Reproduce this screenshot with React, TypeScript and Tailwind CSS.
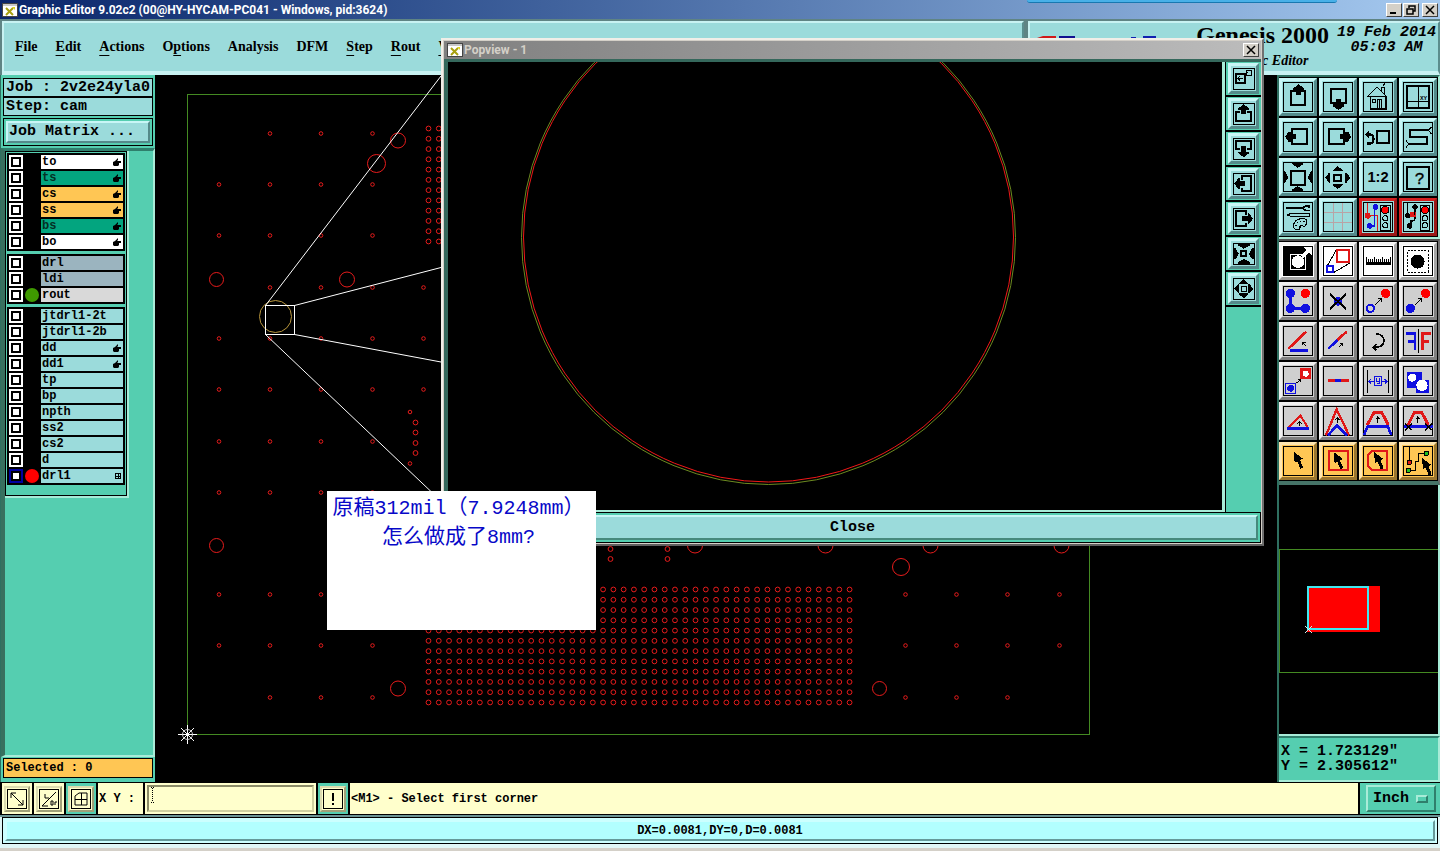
import React from "react";

const K = "#000";
const R = "#e01818";
const B = "#1010e0";

const bevelAqua = "border-t-[#c8f6f6] border-l-[#c8f6f6] border-b-[#548a8a] border-r-[#548a8a] bg-[#9bdbdb]";
const bevelWhite = "border-t-[#f4f4f4] border-l-[#f4f4f4] border-b-[#a4a4a4] border-r-[#a4a4a4] bg-white";
const bevelGray = "border-t-[#f0f0f0] border-l-[#f0f0f0] border-b-[#808080] border-r-[#808080] bg-[#cfcfcf]";
const bevelOrange = "border-t-[#ffe6b0] border-l-[#ffe6b0] border-b-[#9a7630] border-r-[#9a7630] bg-[#ffc654]";
const bevelRed = "border-t-[#d42020] border-l-[#d42020] border-b-[#9c1818] border-r-[#9c1818] bg-[#9bdbdb]";

type Tool = { name: string; tone: string; art: React.ReactNode };

const Cursor = ({ x, y }: { x: number; y: number }) => (
  <path transform={`translate(${x} ${y})`} d="M0 0L3 34L11 29L20 52L29 48L19 26L28 21Z" fill={K} stroke="none" />
);

const viewTools: Tool[] = [
  { name: "Pan up", tone: bevelAqua, art: <><rect x="28" y="31" width="42" height="42" strokeWidth="6" /><path fill={K} stroke="none" d="M50 10L66 22V28H58V43H42V28H34V22Z" /></> },
  { name: "Pan down", tone: bevelAqua, art: <><rect x="27" y="24" width="44" height="43" strokeWidth="6" /><path fill={K} stroke="none" d="M49 87L65 77V70H57V55H41V70H34V77Z" /></> },
  { name: "Home", tone: bevelAqua, art: <><path d="M16 47L45 18L74 47Z" /><path strokeWidth="5" d="M25 47V83H71V47" /><path d="M58 30V18H66V38M62 14L69 8M31 56h8v9h-8zM47 83V56H59V83M53 56V83" /></> },
  { name: "Window XY", tone: bevelAqua, art: <><rect x="14" y="16" width="68" height="66" strokeWidth="6" /><path d="M49 16V82M14 61H82" strokeWidth="4" /><text x="54" y="58" fontSize="18" fontWeight="bold" fill={K} stroke="none" fontFamily="Liberation Mono">XY</text></> },
  { name: "Pan left", tone: bevelAqua, art: <><rect x="31" y="25" width="44" height="44" strokeWidth="6" /><path fill={K} stroke="none" d="M10 47L20 32H27V39H42V55H27V63H20Z" /></> },
  { name: "Pan right", tone: bevelAqua, art: <><rect x="21" y="25" width="44" height="44" strokeWidth="6" /><path fill={K} stroke="none" d="M87 47L78 32H70V39H54V55H70V63H78Z" /></> },
  { name: "Previous view", tone: bevelAqua, art: <><rect x="45" y="30" width="36" height="37" strokeWidth="6" /><path strokeWidth="7" d="M16 67H26Q34 66 34 56V52Q34 42 24 40H18" /><path fill={K} stroke="none" d="M9 40L22 28V52Z" /></> },
  { name: "Serpentine", tone: bevelAqua, art: <><path strokeWidth="6" d="M78 28H24V48H76V69H21" /><path d="M88 18L79 28L88 38M12 59L21 69L12 79" /></> },
  { name: "Zoom in", tone: bevelAqua, art: <><rect x="27" y="29" width="42" height="42" strokeWidth="6" /><path fill={K} stroke="none" d="M31 6H63V10L47 20L31 10ZM47 75L63 85V90H31V85ZM4 31H9L19 49L9 66H4ZM92 31H87L77 49L87 66H92Z" /></> },
  { name: "Zoom out", tone: bevelAqua, art: <><rect x="37" y="41" width="20" height="20" strokeWidth="6" /><path fill={K} stroke="none" d="M47 15L62 28V31H32V28ZM32 69H62V73L47 84L32 73ZM10 50L21 35H25V66H21ZM85 50L73 35H69V66H73Z" /></> },
  { name: "Scale 1:2", tone: bevelAqua, art: <text x="48" y="64" textAnchor="middle" fontSize="44" fontWeight="bold" fill={K} stroke="none" fontFamily="Liberation Sans">1:2</text> },
  { name: "Query", tone: bevelAqua, art: <><rect x="15" y="17" width="66" height="66" strokeWidth="6" /><text x="53" y="69" textAnchor="middle" fontSize="50" fill={K} stroke={K} strokeWidth="1" fontFamily="Liberation Mono">?</text></> },
  { name: "Setup", tone: bevelAqua, art: <><path strokeWidth="6" d="M12 21H60" /><path strokeWidth="5" d="M84 15H70L61 21L70 28H84M80 22V13" /><path d="M14 42L28 37H83V46H28Z" /><path d="M74 56Q62 50 46 56Q34 64 34 76Q36 86 48 86Q56 84 54 76Q60 70 66 78Q76 70 74 56ZM44 64h4M54 60h4M64 62h4M40 74h4" /></> },
  { name: "Grid", tone: bevelAqua, art: <path stroke="#b9a3a5" d="M33 6V90M61 6V90M6 35H90M6 63H90" /> },
  { name: "Net compare", tone: bevelRed, art: <><path stroke={R} d="M17 6V44H47V90" /><path stroke={B} strokeWidth="4" d="M41 18H37V75H23" /><g stroke="none"><circle cx="41" cy="18" r="8" fill={B} /><circle cx="23" cy="75" r="8" fill={B} /><circle cx="17" cy="44" r="9" fill={R} /></g><rect x="56" y="12" width="29" height="75" /><circle cx="70" cy="27" r="11" fill="red" /><circle cx="70" cy="52" r="8" /><circle cx="70" cy="73" r="8" /></> },
  { name: "Net check", tone: bevelRed, art: <><path strokeWidth="4" d="M16 6V44M39 18V54Q38 60 27 60V75" /><g stroke="none" fill={K}><circle cx="39" cy="18" r="8" /><circle cx="23" cy="75" r="8" /><circle cx="17" cy="44" r="8" /></g><path stroke={R} strokeWidth="4" d="M25 45H42M27 32V45M33 32V45M40 32V45" /><rect x="54" y="12" width="29" height="75" /><circle cx="69" cy="27" r="11" fill="red" /><circle cx="69" cy="52" r="8" /><circle cx="69" cy="73" r="8" /></> },
];

const editTools: Tool[] = [
  { name: "Select feature", tone: bevelWhite, art: <><rect x="4" y="4" width="88" height="88" fill={K} stroke="none" /><circle cx="48" cy="50" r="19" fill="#fff" stroke="none" /><rect x="26" y="28" width="45" height="45" stroke="#fff" /><path stroke="#fff" strokeWidth="10" d="M60 36L80 17" /><path fill="#fff" stroke="none" d="M64 6H90V32Z" /></> },
  { name: "Transform", tone: bevelWhite, art: <><path d="M16 62L43 15M36 82L84 54" /><rect x="46" y="16" width="35" height="34" stroke={R} strokeWidth="6" /><rect x="16" y="64" width="17" height="17" stroke={B} strokeWidth="6" /></> },
  { name: "Measure", tone: bevelWhite, art: <><path strokeWidth="8" d="M12 55H88" /><path strokeWidth="3" d="M14 36V56M20 42V56M26 42V56M32 42V56M38 36V56M44 42V56M50 42V56M56 42V56M62 36V56M68 42V56M74 42V56M80 42V56M86 36V56" /></> },
  { name: "Pad highlight", tone: bevelWhite, art: <><rect x="17" y="17" width="61" height="64" strokeDasharray="6 4" /><circle cx="47" cy="50" r="21" fill={K} stroke="none" /></> },
  { name: "Copy", tone: bevelGray, art: <><path stroke={B} strokeWidth="9" d="M25 25V70H70" /><g stroke="none" fill={B}><circle cx="25" cy="25" r="14" /><circle cx="25" cy="70" r="14" /><circle cx="70" cy="70" r="14" /></g><circle cx="70" cy="25" r="14" fill="red" stroke="none" /></> },
  { name: "Delete", tone: bevelGray, art: <><circle cx="48" cy="49" r="13" fill={B} stroke="none" /><path strokeWidth="6" d="M24 27L72 72M72 27L24 72" /></> },
  { name: "Move copy", tone: bevelGray, art: <><circle cx="25" cy="70" r="11" stroke={B} strokeWidth="6" /><circle cx="71" cy="25" r="14" fill="red" stroke="none" /><path d="M39 60L58 42M49 41H59V51" /></> },
  { name: "Move", tone: bevelGray, art: <><circle cx="25" cy="70" r="14" fill={B} stroke="none" /><circle cx="71" cy="25" r="14" fill="red" stroke="none" /><path d="M39 60L58 42M49 41H59V51" /></> },
  { name: "Angle", tone: bevelGray, art: <><path stroke={R} strokeWidth="8" d="M19 71L73 20" /><path stroke={B} strokeWidth="8" d="M24 77H79" /><path d="M73 64L61 52M61 61V51H71" /></> },
  { name: "Extend line", tone: bevelGray, art: <><path stroke={R} strokeWidth="8" d="M46 45L74 20" /><path stroke={B} strokeWidth="8" d="M19 71L47 44" /><path d="M51 66L62 54M53 54H62V63" /></> },
  { name: "Rotate", tone: bevelGray, art: <><path strokeWidth="5" d="M42 26Q66 28 66 48Q66 67 36 67" /><path strokeWidth="5" d="M43 58L34 67L43 76" /></> },
  { name: "Mirror", tone: bevelGray, art: <><path stroke={B} strokeWidth="8" d="M12 26H39V76M18 49H38" /><path d="M49 12V84" /><path stroke={R} strokeWidth="8" d="M87 26H62V76M62 49H80" /></> },
  { name: "Replace pad", tone: bevelGray, art: <><rect x="55" y="10" width="33" height="33" fill={R} stroke="none" /><circle cx="71" cy="26" r="9" fill="#fff" stroke="none" /><rect x="11" y="55" width="30" height="30" stroke={B} /><circle cx="26" cy="70" r="10" fill={B} stroke="none" /><path d="M44 54L54 45M47 44H55V52" /></> },
  { name: "Break line", tone: bevelGray, art: <><path stroke={R} strokeWidth="9" d="M17 47H80" /><path stroke={B} strokeWidth="9" d="M40 47H58" /></> },
  { name: "Spacing", tone: bevelGray, art: <><path d="M16 15V84M78 15V84" /><g stroke={B}><rect x="37" y="35" width="22" height="26" /><path d="M36 49H20M27 42L20 49L27 56M60 49H75M68 42L75 49L68 56M44 40V48H53M53 40V56H46" /></g></> },
  { name: "Merge", tone: bevelGray, art: <><path fill={B} stroke="none" d="M15 21H60V45H80V83H42V70H15Z" /><circle cx="31" cy="38" r="12" fill="#fff" stroke="none" /><circle cx="60" cy="61" r="17" fill="#fff" stroke="none" /></> },
  { name: "Triangle offset", tone: bevelGray, art: <><path stroke={R} strokeWidth="6" d="M18 70L55 31L79 70" /><path stroke={B} strokeWidth="8" d="M15 71H81" /><path d="M53 63V50M47 56L53 49L59 56" /></> },
  { name: "Peak offset", tone: bevelGray, art: <><path stroke={R} strokeWidth="7" d="M12 91L44 13L81 91" /><path stroke={B} strokeWidth="8" d="M18 91L45 61L75 91" /><path d="M46 54V38M40 45L46 38L52 45" /></> },
  { name: "Trapezoid offset", tone: bevelGray, art: <><path stroke={R} strokeWidth="9" d="M16 60L36 22H59L79 60" /><path stroke={B} strokeWidth="8" d="M6 90L17 64H77L88 90" /><path d="M47 53V36M41 43L47 36L53 43" /></> },
  { name: "Trim offset", tone: bevelGray, art: <><path stroke={R} strokeWidth="9" d="M18 60L37 22H59L79 60" /><path stroke={B} strokeWidth="8" d="M6 64H92" /><path d="M47 53V36M41 43L47 36L53 43M9 56L29 76M29 56L9 76M69 56L89 76M89 56L69 76" /></> },
  { name: "Select", tone: bevelOrange, art: <Cursor x={35} y={20} /> },
  { name: "Select in rectangle", tone: bevelOrange, art: <><rect x="20" y="18" width="57" height="58" stroke={R} strokeWidth="6" /><Cursor x={35} y={21} /></> },
  { name: "Select in polygon", tone: bevelOrange, art: <><path stroke={R} strokeWidth="6" d="M30 17H75V76H30L18 62V31Z" /><Cursor x={36} y={21} /></> },
  { name: "Select net", tone: bevelOrange, art: <><path d="M22 6V48M25 76H40V50H50V25H66" strokeWidth="3" /><circle cx="22" cy="52" r="7" fill={R} /><circle cx="19" cy="76" r="7" fill="#20c020" /><circle cx="73" cy="25" r="7" fill="#20c020" /><Cursor x={60} y={39} /></> },
];

const popTools: { name: string; art: React.ReactNode }[] = [
  { name: "Restore view", art: <><rect x="8" y="18" width="27" height="27" strokeWidth="6" /><path d="M40 6H56V22H40ZM36 20L44 12M14 31H29M21 24L14 31L21 38" /></> },
  { name: "Popview up", art: <><path strokeWidth="6" d="M22 26H10V54H54V26H42" /><path fill={K} stroke="none" d="M32 4L48 16V20H40V34H24V20H16V16Z" /></> },
  { name: "Popview down", art: <><path strokeWidth="6" d="M22 34H10V10H54V34H42" /><path fill={K} stroke="none" d="M32 58L48 46V42H40V24H24V42H16V46Z" /></> },
  { name: "Popview left", art: <><path strokeWidth="6" d="M26 20V10H54V54H26V44" /><path fill={K} stroke="none" d="M4 32L16 16H20V24H36V40H20V48H16Z" /></> },
  { name: "Popview right", art: <><path strokeWidth="6" d="M38 20V10H10V54H38V44" /><path fill={K} stroke="none" d="M60 32L48 16H44V24H26V40H44V48H48Z" /></> },
  { name: "Popview zoom in", art: <><rect x="25" y="25" width="15" height="15" strokeWidth="6" /><path fill={K} stroke="none" d="M16 3H50V8L32 17L16 8ZM16 62H50V57L32 48L16 57ZM3 16H8L17 32L8 49H3ZM62 16H57L48 32L57 49H62Z" /></> },
  { name: "Popview zoom out", art: <><rect x="26" y="26" width="13" height="13" /><path fill={K} stroke="none" d="M32 4L46 16V19H18V16ZM32 61L46 49V46H18V49ZM4 32L16 18H19V46H16ZM61 32L49 18H46V46H49Z" /></> },
];

const menus: [string, string, string][] = [
  ["", "F", "ile"], ["", "E", "dit"], ["", "A", "ctions"], ["O", "p", "tions"], ["Analysis", "", ""], ["DFM", "", ""], ["", "S", "tep"], ["", "R", "out"], ["", "W", "indows"],
];

const AQ = "bg-[#9bdbdb]";
type Layer = { name: string; bg: string; hand?: boolean; dot?: string; active?: boolean };
const layerGroups: Layer[][] = [
  [
    { name: "to", bg: "bg-white", hand: true },
    { name: "ts", bg: "bg-[#03a57f] text-[#053024]", hand: true },
    { name: "cs", bg: "bg-[#ffc654]", hand: true },
    { name: "ss", bg: "bg-[#ffc654]", hand: true },
    { name: "bs", bg: "bg-[#03a57f] text-[#053024]", hand: true },
    { name: "bo", bg: "bg-white", hand: true },
  ],
  [
    { name: "drl", bg: "bg-[#9bb4bf]" },
    { name: "ldi", bg: "bg-[#9bb4bf]" },
    { name: "rout", bg: "bg-[#d9d9d9]", dot: "bg-[#3f9a00]" },
  ],
  [
    { name: "jtdrl1-2t", bg: AQ },
    { name: "jtdrl1-2b", bg: AQ },
    { name: "dd", bg: AQ, hand: true },
    { name: "dd1", bg: AQ, hand: true },
    { name: "tp", bg: AQ },
    { name: "bp", bg: AQ },
    { name: "npth", bg: AQ },
    { name: "ss2", bg: AQ },
    { name: "cs2", bg: AQ },
    { name: "d", bg: AQ },
    { name: "drl1", bg: AQ, dot: "bg-[#ff0000]", active: true },
  ],
];

const mono = "font-['Liberation_Mono',monospace] font-bold";
const caption = "font-['Roboto',sans-serif] text-xs leading-4 font-bold whitespace-nowrap";

function AppIcon() {
  return (
    <svg viewBox="0 0 16 14" className="h-3.5 w-4 shrink-0" aria-hidden="true">
      <rect x="0.5" y="0.5" width="15" height="13" fill="#fff" stroke="#444" />
      <path d="M1 2H15" stroke="#c8c8c8" strokeWidth="2" />
      <path d="M4 5L11 12M11 5L4 12" stroke="#a8a010" strokeWidth="2" />
      <path d="M10 4h3v3z" fill="#e0d820" />
    </svg>
  );
}

function CaptionButton({ label, children }: { label: string; children: React.ReactNode }) {
  return (
    <button aria-label={label} className="flex h-3.5 w-4 items-center justify-center border border-t-white border-r-[#404040] border-b-[#404040] border-l-white bg-[#d4d0c8]">
      <svg viewBox="0 0 12 10" className="h-2.5 w-3" fill="none" stroke="#000" strokeWidth="1.5">{children}</svg>
    </button>
  );
}

function ToolGrid({ tools }: { tools: Tool[] }) {
  return (
    <div className="grid grid-cols-[38px_38px_38px_38px] gap-0.5 bg-black py-px">
      {tools.map((t) => (
        <button key={t.name} aria-label={t.name} className={`h-[38px] border-3 ${t.tone}`}>
          <svg viewBox="0 0 96 96" className="block size-8" fill="none" stroke={K} strokeWidth="3" shapeRendering="crispEdges">
            <rect x="4" y="4" width="87" height="87" />
            {t.art}
          </svg>
        </button>
      ))}
    </div>
  );
}

function TitleBar() {
  return (
    <div className="relative flex h-[19px] items-center gap-px bg-linear-to-r from-[#0a246a] to-[#a6caf0] px-0.5">
      <AppIcon />
      <h1 className={`flex-1 text-white ${caption}`}>
        Graphic Editor 9.02c2 (00@HY-HYCAM-PC041 - Windows, pid:3624)
      </h1>
      <div className="absolute top-0 right-[103px] h-[3px] w-[310px] rounded-b border-b border-[#1878b0] bg-[#48b0e8]" />
      <CaptionButton label="Minimize"><path d="M2 8H8" strokeWidth="2" /></CaptionButton>
      <CaptionButton label="Restore"><path d="M4 3V1H10V6H8M2 4H8V9H2Z" /></CaptionButton>
      <div className="ml-0.5 flex"><CaptionButton label="Close window"><path d="M2 1L10 9M10 1L2 9" /></CaptionButton></div>
    </div>
  );
}

function Header() {
  const panel = "border-t-2 border-l-2 border-r-2 border-b-4 border-t-[#c8f2f2] border-l-[#c8f2f2] border-r-[#5b8e8e] border-b-[#c8f2f2] bg-[#9bdbdb]";
  return (
    <header className="flex h-14 gap-1 bg-[#5f8484] pt-0.5 pl-0.5">
      <nav className={`flex flex-1 items-center gap-[18px] overflow-hidden pl-[11px] ${panel}`}>
        {menus.map(([a, u, b]) => (
          <button key={a + u + b} className="font-['Liberation_Serif',serif] text-sm font-bold whitespace-nowrap text-black">
            {a}<span className="underline underline-offset-4">{u}</span>{b}
          </button>
        ))}
      </nav>
      <div className={`flex w-[412px] justify-between pl-[7px] ${panel}`}>
        <svg viewBox="0 0 124 24" className="mt-[13px] h-6 w-[124px]" aria-hidden="true">
          <path d="M6 0H19V22H0V2Z" fill="#d01818" />
          <path d="M22 0H38V22H22Z" fill="#101090" />
          <path d="M94 1H99V20H94ZM106 0H119V3H106Z" fill="#1020b0" />
        </svg>
        <div className="flex">
          <div className="flex flex-col items-center font-['Liberation_Serif',serif] font-bold whitespace-nowrap">
            <span className="text-2xl leading-6">Genesis 2000</span>
            <span className="pt-1.5 pl-1 text-sm leading-4 italic">Graphic Editor</span>
          </div>
          <time className={`pt-0.5 pr-0.5 pl-2 text-center text-[15px] leading-[15px] whitespace-nowrap italic ${mono}`}>
            19 Feb 2014<br />05:03 AM
          </time>
        </div>
      </div>
    </header>
  );
}

function LayerRow({ layer }: { layer: Layer }) {
  return (
    <label className="flex h-3.5 items-center">
      <input
        type="checkbox"
        className={`size-3.5 appearance-none border-2 bg-white shadow-[inset_0_0_0_2px_#000] ${layer.active ? "border-[#0000a0]" : "border-white"}`}
      />
      <span className="flex w-[18px] justify-center">
        {layer.dot && <span className={`size-3.5 rounded-full ${layer.dot}`} />}
      </span>
      <span className={`flex h-3.5 flex-1 items-center justify-between pr-0.5 pl-px text-xs leading-3.5 ${layer.bg}`}>
        {layer.name}
        {layer.hand && (
          <svg viewBox="0 0 8 8" className="size-2" aria-hidden="true">
            <path d="M0 4L2 3L5 0V2L4 3H8V5H6V7L5 8H1L0 7Z" fill="#000" />
          </svg>
        )}
        {layer.active && (
          <svg viewBox="0 0 6 6" className="size-1.5" aria-hidden="true" shapeRendering="crispEdges">
            <path d="M0.5 0.5H5.5V5.5H0.5ZM3 0V6M0 3H6" fill="none" stroke="#000" />
          </svg>
        )}
      </span>
    </label>
  );
}

function Sidebar() {
  return (
    <aside className={`flex w-[155px] shrink-0 flex-col border-l border-l-[#2f6f60] bg-[#55ceb0] text-black ${mono}`}>
      <div className="px-0.5 pt-[3px] pb-0.5 text-[15px] leading-[17px] whitespace-nowrap">
        <div className="border border-black bg-[#9bdbdb] pl-0.5">Job : 2v2e24yla0</div>
        <div className="border border-black bg-[#9bdbdb] pl-0.5">Step: cam</div>
      </div>
      <div className="mx-0.5 border border-black p-0.5">
        <button className="block h-[22px] w-full border-2 border-t-[#c8f6f6] border-r-[#548a8a] border-b-[#548a8a] border-l-[#c8f6f6] bg-[#9bdbdb] pl-px text-left text-[15px] leading-[18px]">
          Job Matrix ...
        </button>
      </div>
      <div className="mt-0.5 flex flex-1 flex-col border-t-3 border-r-2 border-b-2 border-l-4 border-t-[#2f7f6c] border-r-[#a8ecd8] border-b-[#a8ecd8] border-l-[#38705f]">
        <div className="w-[124px] border-r-2 border-b-2 border-[#a8ecd8]">
          <div className="flex flex-col gap-[3px] border border-black px-px pt-px pb-2.5">
            {layerGroups.map((group) => (
              <div key={group[0].name} className="flex flex-col gap-0.5 bg-black p-0.5">
                {group.map((l) => <LayerRow key={l.name} layer={l} />)}
              </div>
            ))}
          </div>
        </div>
      </div>
      <div className="px-0.5 pt-px pb-1">
        <div className="border border-black bg-[#ffc654] pl-0.5 text-xs leading-[18px]">Selected : 0</div>
      </div>
    </aside>
  );
}

const smallHoles: [number, number][] = [];
for (const y of [184.5, 235.5, 338.5, 389.5, 441.5, 492.5, 594.5, 645.5]) for (const x of [219, 270, 321, 372.5]) smallHoles.push([x, y]);
for (const y of [133.5, 287.5, 697.5]) for (const x of [270, 321, 372.5]) smallHoles.push([x, y]);
for (const y of [287.5, 338.5, 389.5]) smallHoles.push([423.5, y]);
for (const y of [594.5, 645.5, 697.5]) for (const x of [905.5, 956.5, 1007.5]) smallHoles.push([x, y]);
smallHoles.push([1059.5, 594.5], [1059.5, 645.5], [410, 412], [410, 463.5]);

const gridHoles: [number, number][] = [];
for (let r = 0; r < 12; r++) {
  for (let c = 0; c < 42; c++) gridHoles.push([428.5 + c * 10.27, 589.5 + r * 10.27]);
  for (let c = 0; c < 2; c++) gridHoles.push([428.5 + c * 10.27, 128.5 + r * 10.27]);
}
for (const y of [422.5, 432.5, 443, 453]) gridHoles.push([415.5, y]);
for (const x of [610.5, 667.5]) for (const y of [549, 559]) gridHoles.push([x, y]);

const bigHoles: [number, number, number][] = [
  [398, 140.5, 7.5], [376.5, 163.5, 9], [216.5, 279.5, 7], [347, 279.5, 7.5], [216.5, 545.5, 7], [398, 688.5, 7.5],
  [879.5, 688.5, 7], [901, 567, 8.5], [695, 545.5, 7.5], [825.5, 545.5, 7.5], [930.5, 545.5, 7.5], [1061.5, 545.5, 7.5],
];

function Board() {
  return (
    <main className="flex min-w-0 flex-1 bg-black">
      <svg viewBox="155 75 1122 690" preserveAspectRatio="xMinYMin meet" className="min-w-0 flex-1" fill="none" strokeWidth="1" role="img" aria-label="Drill layer drawing">
        <rect x="187.5" y="94.5" width="902" height="640" stroke="#448a22" />
        <g stroke="#e81c1c">
          {smallHoles.map(([x, y]) => <circle key={`${x}-${y}`} cx={x} cy={y} r="1.8" />)}
          {gridHoles.map(([x, y]) => <circle key={`${x}-${y}`} cx={x} cy={y} r="2.4" />)}
          {bigHoles.map(([x, y, r]) => <circle key={`${x}-${y}`} cx={x} cy={y} r={r} />)}
        </g>
        <circle cx="275.5" cy="316.5" r="16" stroke="#b8963c" />
        <g stroke="#fff">
          <rect x="265.5" y="305.5" width="29" height="29" />
          <path d="M265.5 305.5L441 76M294.5 305.5L441 267.5M294.5 334.5L441 362M265.5 334.5L441 501" />
          <path d="M178 734.5H197M187.5 725V744M181 728L194 741M194 728L181 741" />
          <circle cx="187.5" cy="734.5" r="5" stroke="#ccc" />
        </g>
      </svg>
    </main>
  );
}

function ToolPanel() {
  return (
    <aside className="flex w-[163px] shrink-0 flex-col border-l-2 border-[#2f6f60] bg-black">
      <div className="border-t-2 border-r-2 border-b-2 border-[#2f6f60] border-b-[#a8ecd8] border-r-[#a8ecd8]"><ToolGrid tools={viewTools} /></div>
      <div className="border-t-2 border-r-2 border-b-4 border-t-[#505050] border-r-[#707070] border-b-[#467468]"><ToolGrid tools={editTools} /></div>
      <div className="flex flex-1 border-r-2 border-b-2 border-[#a8ecd8]">
        <svg viewBox="1279 485 159 230" preserveAspectRatio="xMinYMin meet" className="min-w-0 flex-1" fill="none" role="img" aria-label="Overview" shapeRendering="crispEdges">
          <path d="M1438 549.5H1279.5V672.5H1438" stroke="#448a22" />
          <rect x="1307" y="586" width="73" height="46" fill="red" />
          <rect x="1308" y="587" width="60" height="42" stroke="#40e8f0" strokeWidth="2" />
          <path d="M1305 626L1312 633M1312 626L1305 633" stroke="#d0f0f0" />
        </svg>
      </div>
      <div className={`border-t-2 border-r-2 border-b-2 border-t-[#2f7f6c] border-r-[#a8ecd8] border-b-[#a8ecd8] bg-[#55ceb0] py-1.5 pl-0.5 text-[15px] leading-[15px] whitespace-pre text-black ${mono}`}>
        <p>X = 1.723129"</p>
        <p>Y = 2.305612"</p>
      </div>
    </aside>
  );
}

function ModeButton({ label, green, children }: { label: string; green?: boolean; children: React.ReactNode }) {
  return (
    <div className={`flex h-[31px] w-[30px] items-center justify-center ${green ? "bg-[#55ceb0]" : "bg-[#ffffcc]"}`}>
      <button aria-label={label} className="size-[26px] border-2 border-t-[#dcdcb0] border-r-[#a0a078] border-b-[#a0a078] border-l-[#dcdcb0] bg-[#ffffcc] p-px">
        <svg viewBox="0 0 20 20" className="block size-5" fill="none" stroke="#000" strokeWidth="1">
          <rect x="0.5" y="0.5" width="19" height="19" shapeRendering="crispEdges" />
          {children}
        </svg>
      </button>
    </div>
  );
}

function StatusRow() {
  return (
    <div className={`flex h-[33px] gap-0.5 bg-black pt-px pb-px pl-0.5 text-xs text-black ${mono}`}>
      <ModeButton label="Diagonal mode"><path d="M4 4L16 16M4 9V4H9M11 16H16V11" /></ModeButton>
      <ModeButton label="Angle mode"><path d="M3 17L17 3M3 17H9M6 5V9H10M12 12V16H14V12ZM16 16V13H18" /></ModeButton>
      <ModeButton label="Grid mode" green><path d="M4 7L8 4H16V16H4ZM10.5 4V16M4 10.5H16" /></ModeButton>
      <label htmlFor="xy" className="flex w-[45px] items-center bg-[#ffffcc] pl-px whitespace-nowrap">X Y :</label>
      <div className="relative w-[171px] bg-[#ffffcc] p-0.5">
        <input id="xy" type="text" className="block h-[27px] w-full border-2 border-t-[#8c8c68] border-r-[#d0d0a0] border-b-[#d0d0a0] border-l-[#8c8c68] bg-[#ffffcc] px-1.5 outline-none" />
        <svg viewBox="0 0 3 16" className="absolute top-1 left-1.5 h-4 w-[3px]" aria-hidden="true"><path d="M0 .5H3M0 15.5H3M1.5 1V15" stroke="#000" strokeDasharray="1 1" /></svg>
      </div>
      <ModeButton label="Warnings" green><path d="M10 4V12M10 14V16" strokeWidth="2" /></ModeButton>
      <output className="flex flex-1 items-center bg-[#ffffcc] pl-px whitespace-nowrap">&lt;M1&gt; - Select first corner</output>
      <div className="w-20 bg-[#55ceb0] py-0.5 pr-1 pl-1.5">
        <div className="relative">
          <select aria-label="Units" className="block h-[27px] w-full appearance-none border-2 border-t-[#a8ecd8] border-r-[#2f7f6c] border-b-[#2f7f6c] border-l-[#a8ecd8] bg-[#55ceb0] pl-[5px] text-[15px] leading-5">
            <option>Inch</option>
            <option>MM</option>
          </select>
          <span className="pointer-events-none absolute top-2.5 right-2 h-2 w-3 border-2 border-t-[#a8ecd8] border-r-[#2f7f6c] border-b-[#2f7f6c] border-l-[#a8ecd8]" />
        </div>
      </div>
    </div>
  );
}

function PopView() {
  return (
    <section aria-label="Popview" className="absolute top-[38px] right-[176px] left-[441px] flex flex-col border-2 border-t-[#f0eee8] border-r-[#707070] border-b-[#606060] border-l-[#f0eee8] bg-[#d4d0c8] p-px text-black">
      <div className="flex h-[18px] items-center bg-linear-to-r from-[#808080] to-[#bcbcbc] pr-0.5 pl-[3px]">
        <AppIcon />
        <h2 className={`flex-1 pl-px text-[#d4d0c8] ${caption}`}>Popview - 1</h2>
        <CaptionButton label="Close popview"><path d="M2 1L10 9M10 1L2 9" /></CaptionButton>
      </div>
      <div className="flex border-t-3 border-l-4 border-[#35685c] bg-[#55ceb0]">
        <div className="flex min-w-0 flex-1 border-r-3 border-b-2 border-[#a8ecd8] bg-black">
          <svg viewBox="448 62 774 440" preserveAspectRatio="xMinYMin meet" className="min-w-0 flex-1" fill="none" role="img" aria-label="Magnified hole outline">
            <circle cx="768.5" cy="237.5" r="247" stroke="#6c8a20" />
            <circle cx="768.5" cy="237" r="245" stroke="#f01818" />
          </svg>
        </div>
        <div className="flex w-9 flex-col gap-0.5 border-l border-black bg-black">
          {popTools.map((t) => (
            <div key={t.name} className="flex h-[33px] items-center justify-center bg-[#55ceb0]">
              <button aria-label={t.name} className={`flex size-[31px] items-center justify-center border-3 ${bevelAqua}`}>
                <svg viewBox="0 0 66 66" className="block size-[22px]" fill="none" stroke={K} strokeWidth="3" shapeRendering="crispEdges">
                  <rect x="1" y="1" width="63" height="63" />
                  {t.art}
                </svg>
              </button>
            </div>
          ))}
          <div className="h-[205px] bg-[#55ceb0]" />
        </div>
      </div>
      <div className="border border-black bg-[#55ceb0] p-0.5">
        <button className={`block h-[25px] w-full border-2 border-t-[#c8f6f6] border-r-[#46897c] border-b-[#46897c] border-l-[#c8f6f6] bg-[#9bdbdb] text-[15px] leading-[21px] ${mono}`}>
          Close
        </button>
      </div>
    </section>
  );
}

function Note() {
  const latin = "font-['Liberation_Mono',monospace] text-xl leading-7";
  return (
    <div className="absolute top-[491px] left-[327px] h-[139px] w-[269px] bg-white pr-1.5 font-['Noto_Sans_CJK_SC',sans-serif] text-[21px] leading-[29px] whitespace-nowrap text-[#0808c8]">
      <p className="flex h-[29px] items-baseline justify-center">原稿<span className={latin}>312mil</span>（<span className={latin}>7.9248mm</span>）</p>
      <p className="flex h-[29px] items-baseline justify-center">怎么做成了<span className={latin}>8mm?</span></p>
    </div>
  );
}

export default function App() {
  return (
    <div className="relative flex min-h-screen flex-col bg-black">
      <TitleBar />
      <Header />
      <div className="flex min-h-0 flex-1">
        <Sidebar />
        <Board />
        <ToolPanel />
      </div>
      <StatusRow />
      <footer className="border-t-2 border-b-3 border-t-[#6b9494] border-b-[#d4d0c8] bg-[#e0f6f6] px-0.5 pb-1">
        <div className="border border-black bg-[#ccffff] p-0.5">
          <div className={`h-[21px] border-2 border-t-[#ccffff] border-r-[#659a9a] border-b-[#659a9a] border-l-[#ccffff] bg-[#b2ffff] text-center text-xs leading-[19px] text-black ${mono}`}>
            DX=0.0081,DY=0,D=0.0081
          </div>
        </div>
      </footer>
      <PopView />
      <Note />
    </div>
  );
}
